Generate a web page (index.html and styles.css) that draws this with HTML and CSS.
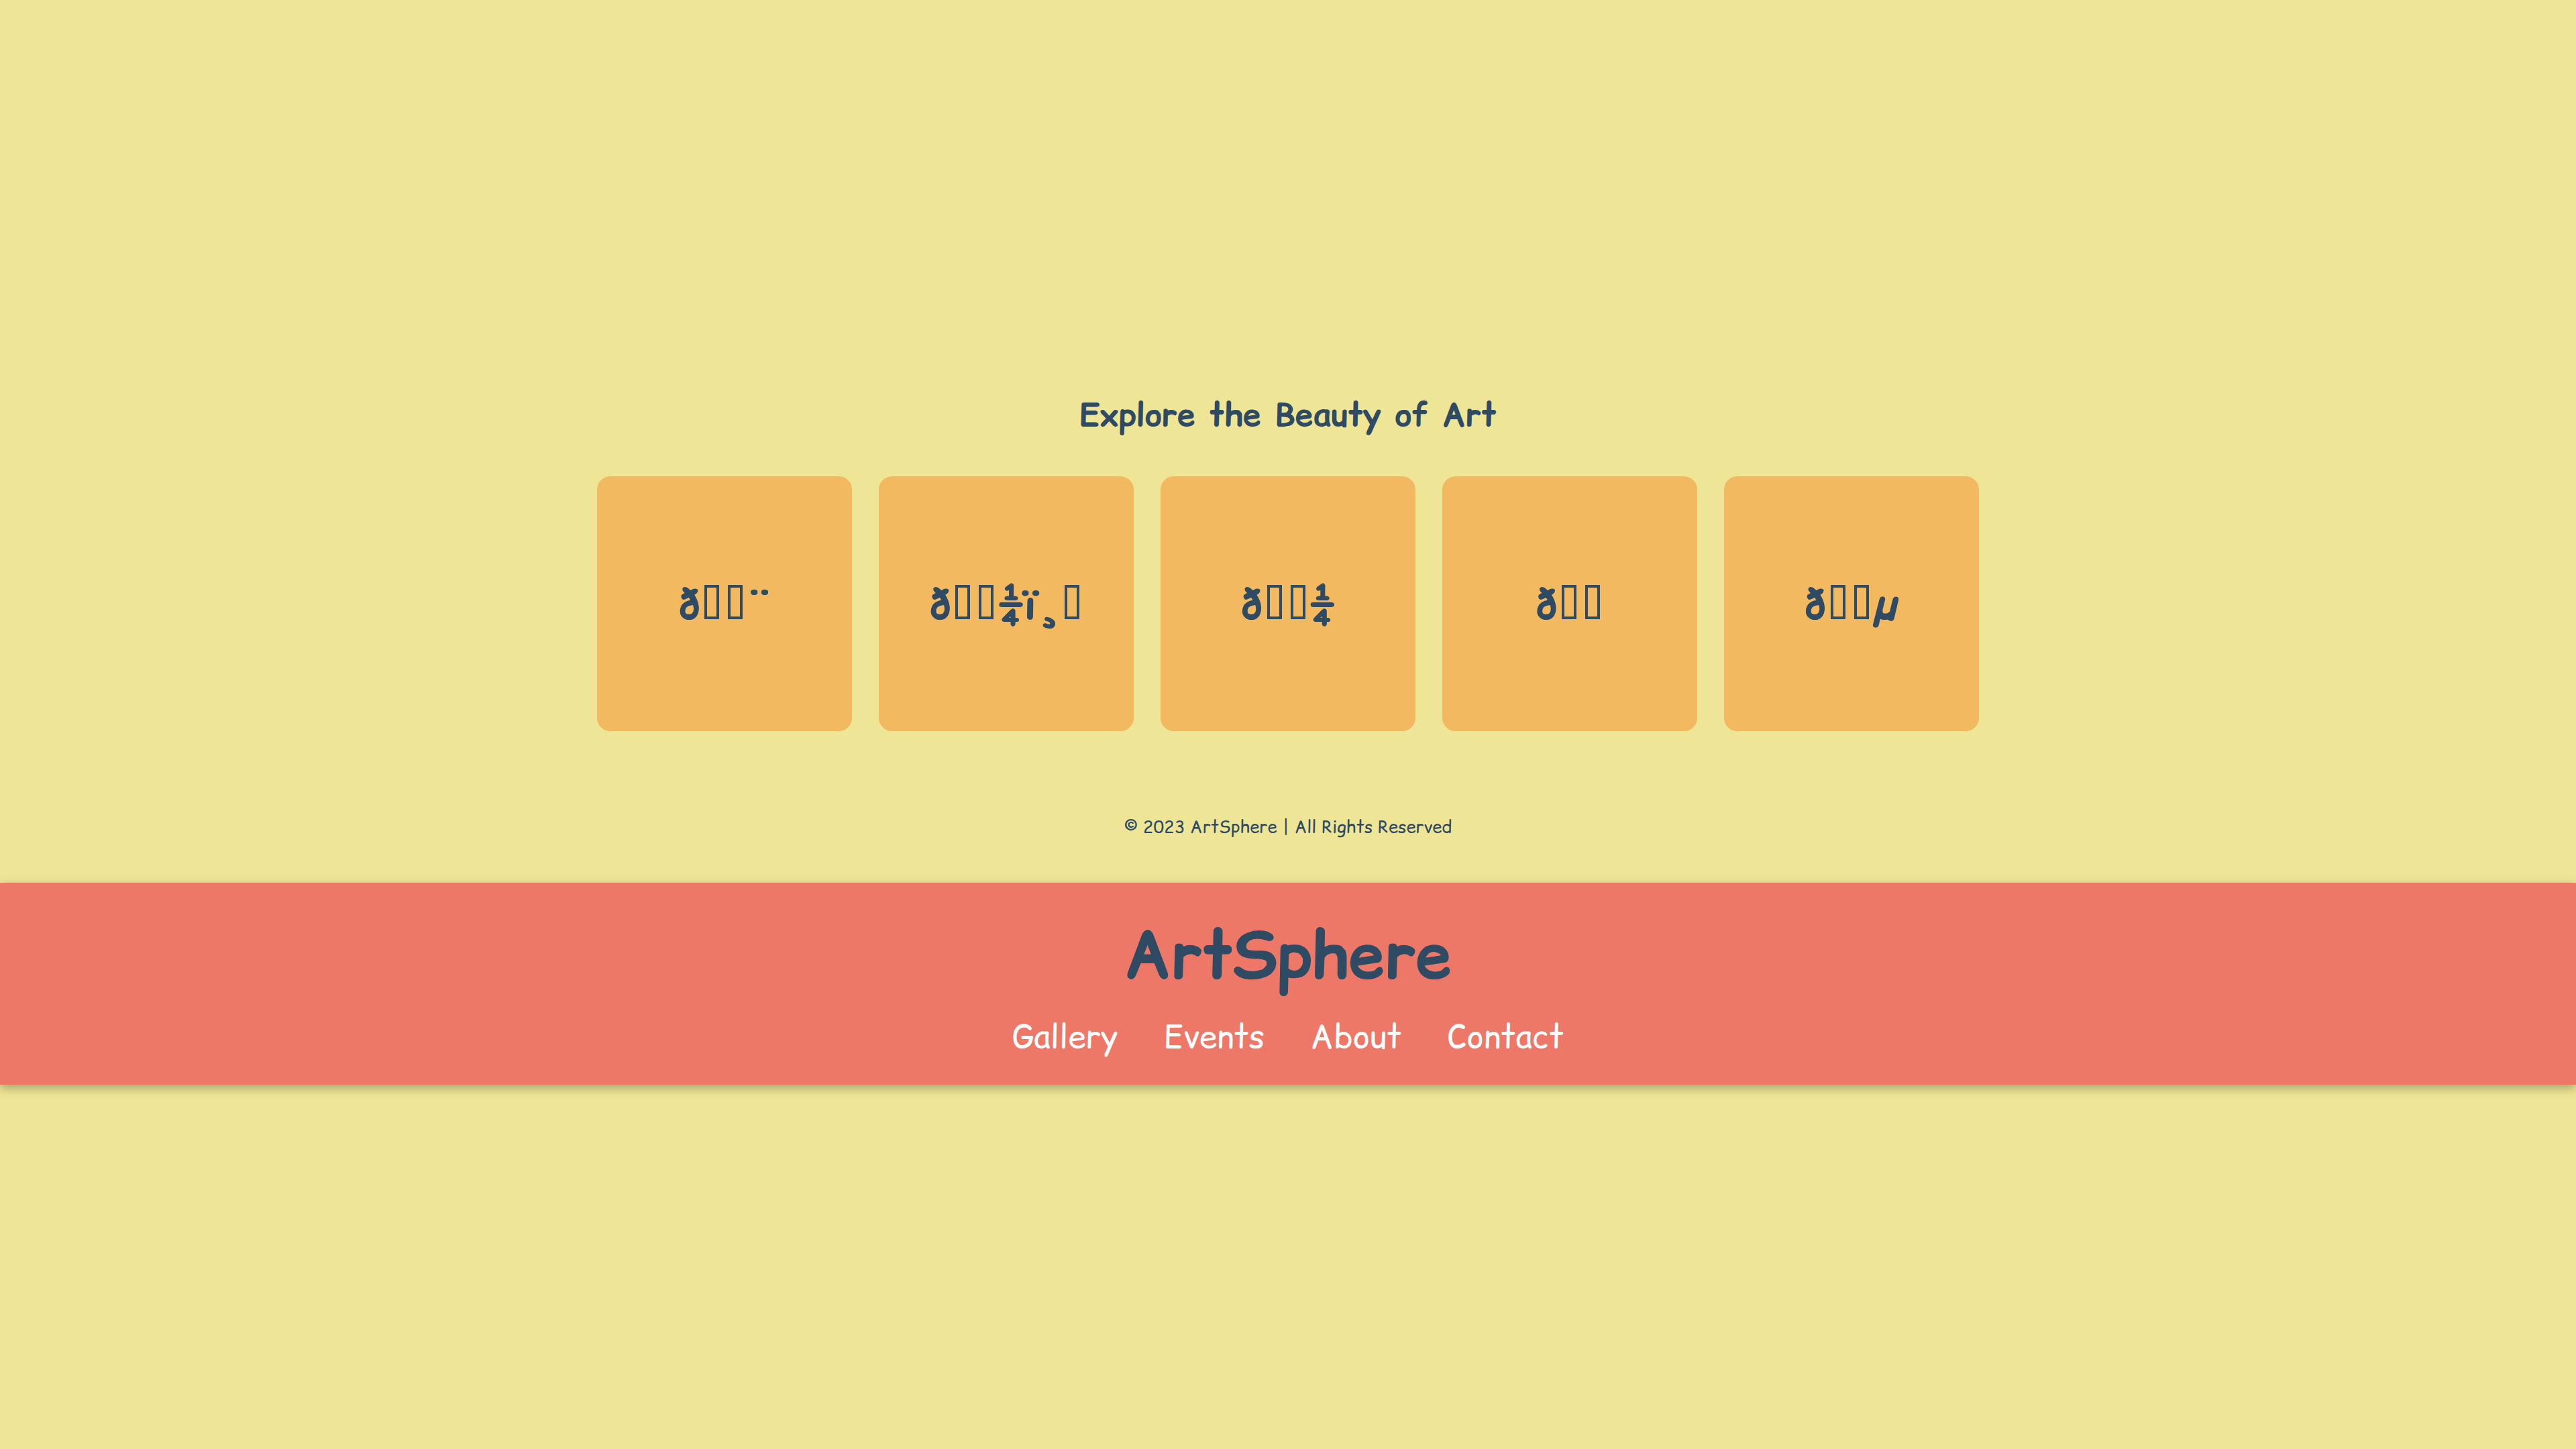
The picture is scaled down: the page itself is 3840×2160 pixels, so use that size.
FILE: index.html
```html
<!DOCTYPE html>
<html lang="en">
<head>
<meta charset="utf-8">
<title>ArtSphere</title>
<link rel="stylesheet" href="styles.css">
</head>
<body>
<main class="showcase">
  <h2 class="showcase-title">Explore the Beauty of Art</h2>
  <div class="art-grid">
    <div class="art-card"><span class="glyphs" data-codes="f0 9f 8e a8"></span></div>
    <div class="art-card"><span class="glyphs" data-codes="f0 9f 96 bc ef b8 8f"></span></div>
    <div class="art-card"><span class="glyphs" data-codes="f0 9f 8e bc"></span></div>
    <div class="art-card"><span class="glyphs" data-codes="f0 9f 8e ad"></span></div>
    <div class="art-card"><span class="glyphs" data-codes="f0 9f 8e b5"></span></div>
  </div>
</main>
<footer class="site-footer">&copy; 2023 ArtSphere | All Rights Reserved</footer>
<header class="site-header">
  <h1 class="brand">ArtSphere</h1>
  <nav class="nav">
    <a href="#">Gallery</a>
    <a href="#">Events</a>
    <a href="#">About</a>
    <a href="#">Contact</a>
  </nav>
</header>
<script src="script.js"></script>
</body>
</html>
```

FILE: styles.css
```css
html, body {
  margin: 0;
  padding: 0;
}
body {
  background: #eee696;
  font-family: "Comic Relief", "Comic Neue", cursive, sans-serif;
  color: #2f4b63;
  min-height: 2160px;
}
.showcase {
  padding-top: 584px;
  display: flex;
  flex-direction: column;
  align-items: center;
}
.showcase-title {
  margin: 0 0 59px;
  font-size: 48px;
  font-weight: bold;
}
.art-grid {
  display: flex;
  gap: 40px;
}
.art-card {
  width: 380px;
  height: 380px;
  background: #f3b961;
  border-radius: 20px;
  display: flex;
  align-items: center;
  justify-content: center;
  font-size: 64px;
  font-weight: bold;
}
.glyphs {
  white-space: nowrap;
}
.tofu {
  display: inline-block;
  box-sizing: border-box;
  width: 22px;
  height: 51px;
  margin: 0 6px 0 7px;
  border: 4px solid currentColor;
  overflow: hidden;
  color: inherit;
  font-size: 8px;
  line-height: 1;
  vertical-align: baseline;
}
.site-footer {
  text-align: center;
  font-size: 25.6px;
  padding: 124px 0 66px;
}
.site-header {
  background: #ee7868;
  box-shadow: 0 5px 15px rgba(0, 0, 0, 0.3);
  height: 301px;
  box-sizing: border-box;
  padding-top: 41px;
  display: flex;
  flex-direction: column;
  align-items: center;
}
.brand {
  margin: 0;
  font-size: 96px;
  font-weight: bold;
}
.nav {
  display: flex;
  gap: 68px;
  margin-top: 20px;
}
.nav a {
  color: #ffffff;
  text-decoration: none;
  font-size: 48px;
}
```

FILE: script.js
```js
document.querySelectorAll('.glyphs').forEach(function (holder) {
  var codes = holder.getAttribute('data-codes').split(' ');
  holder.textContent = '';
  codes.forEach(function (h) {
    var code = parseInt(h, 16);
    var ch = String.fromCharCode(code);
    if (code >= 0x80 && code <= 0x9f) {
      var span = document.createElement('span');
      span.className = 'tofu';
      span.textContent = ch;
      holder.appendChild(span);
    } else {
      holder.appendChild(document.createTextNode(ch));
    }
  });
});
```
